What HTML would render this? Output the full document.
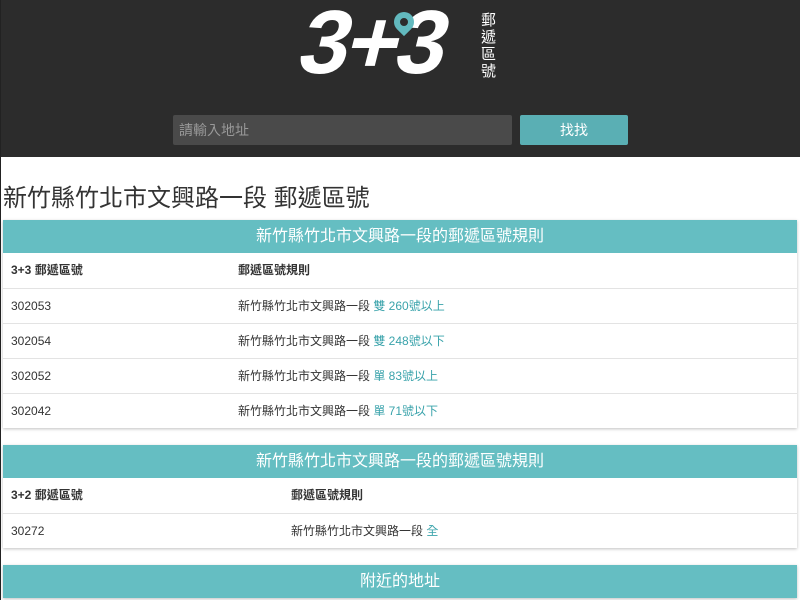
<!DOCTYPE html>
<html><head><meta charset="utf-8">
<style>
*{box-sizing:border-box;margin:0;padding:0}
body{width:800px;height:600px;overflow:hidden;background:#fff;font-family:"Liberation Sans","Noto Sans CJK TC",sans-serif;color:#333;position:relative}
.edge{position:absolute;left:0;top:0;width:1px;height:600px;background:#222;z-index:5}
.hd{position:absolute;left:0;top:0;width:800px;height:157px;background:#2c2c2c}
.logo{position:absolute;left:302px;top:-8px;font:bold 90px "Liberation Sans",sans-serif;color:#fff;letter-spacing:-3px;transform:skewX(-14deg)}
.pin{position:absolute;left:394px;top:12px;width:20px;height:20px;background:#62b9be;border-radius:50% 50% 50% 0;transform:rotate(-45deg)}
.pin:after{content:"";position:absolute;left:6px;top:6px;width:8px;height:8px;border-radius:50%;background:#2c2c2c}
.vt{position:absolute;left:481px;top:11px;width:16px;color:#fff;font-size:15px;line-height:17px;font-family:"Noto Sans CJK TC",sans-serif}
.inp{position:absolute;left:173px;top:115px;width:339px;height:30px;background:#4a4a4a;border-radius:2px;color:#999;font-size:14px;line-height:30px;padding-left:6px}
.btn{position:absolute;left:520px;top:115px;width:108px;height:30px;background:#5aafb4;border-radius:2px;color:#fff;font-size:14px;text-align:center;line-height:30px}
h1{position:absolute;left:3px;top:178px;font-size:24px;font-weight:normal;color:#333}
.card{position:absolute;left:3px;width:794px;background:#fff;box-shadow:0 1px 3px rgba(0,0,0,.25)}
.ch{height:33px;background:#65bec2;color:#fff;font-size:16px;text-align:center;line-height:33px}
.row{height:35px;border-top:1px solid #e3e3e3;font-size:12px;line-height:35px;position:relative}
.ch+.row{border-top:none}
.row span{position:absolute;left:8px}
.row b{position:absolute;font-weight:normal}
.th span,.th b{font-weight:bold}
.t{color:#3aa3ab;font-style:normal}
</style></head><body>
<div class="edge"></div>
<div class="hd">
<div class="logo">3+3</div>
<div class="pin"></div>
<div class="vt">郵遞區號</div>
<div class="inp">請輸入地址</div>
<div class="btn">找找</div>
</div>
<h1>新竹縣竹北市文興路一段 郵遞區號</h1>
<div class="card" style="top:220px">
<div class="ch">新竹縣竹北市文興路一段的郵遞區號規則</div>
<div class="row th"><span>3+3 郵遞區號</span><b style="left:235px">郵遞區號規則</b></div>
<div class="row"><span>302053</span><b style="left:235px">新竹縣竹北市文興路一段 <i class="t">雙 260號以上</i></b></div>
<div class="row"><span>302054</span><b style="left:235px">新竹縣竹北市文興路一段 <i class="t">雙 248號以下</i></b></div>
<div class="row"><span>302052</span><b style="left:235px">新竹縣竹北市文興路一段 <i class="t">單 83號以上</i></b></div>
<div class="row"><span>302042</span><b style="left:235px">新竹縣竹北市文興路一段 <i class="t">單 71號以下</i></b></div>
</div>
<div class="card" style="top:445px">
<div class="ch">新竹縣竹北市文興路一段的郵遞區號規則</div>
<div class="row th"><span>3+2 郵遞區號</span><b style="left:288px">郵遞區號規則</b></div>
<div class="row"><span>30272</span><b style="left:288px">新竹縣竹北市文興路一段 <i class="t">全</i></b></div>
</div>
<div class="card" style="top:565px">
<div class="ch">附近的地址</div>
</div>
</body></html>
